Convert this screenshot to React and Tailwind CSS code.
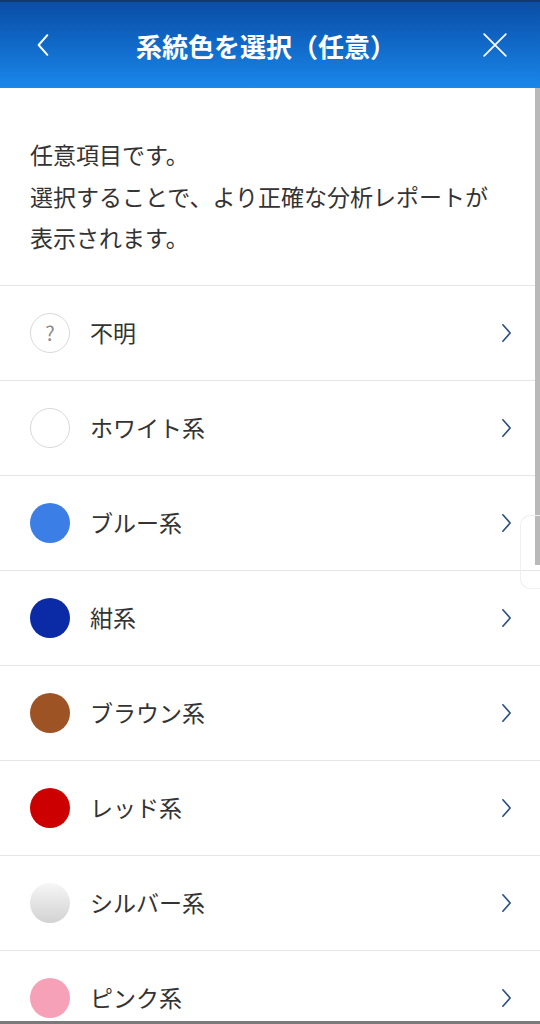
import React from 'react';

const colors = [
  { label: '不明', type: 'unknown' },
  { label: 'ホワイト系', type: 'white' },
  { label: 'ブルー系', cls: 'bg-[#3b7fe6]' },
  { label: '紺系', cls: 'bg-[#0b2ba6]' },
  { label: 'ブラウン系', cls: 'bg-[#9e5325]' },
  { label: 'レッド系', cls: 'bg-[#cc0000]' },
  { label: 'シルバー系', cls: 'bg-gradient-to-b from-[#f6f6f6] to-[#d2d2d2]' },
  { label: 'ピンク系', cls: 'bg-[#f7a1b9]' },
];

const Swatch = ({ item }) => {
  if (item.type === 'unknown') {
    return (
      <div className="w-10 h-10 rounded-full border border-[#d9d9d9] flex items-center justify-center text-[#8a8a8a] text-[20px]">
        ?
      </div>
    );
  }
  if (item.type === 'white') {
    return <div className="w-10 h-10 rounded-full border border-[#d9d9d9] bg-white" />;
  }
  return <div className={`w-10 h-10 rounded-full ${item.cls}`} />;
};

const Chevron = ({ className, dir = 'right' }) => (
  <svg viewBox="0 0 12 22" className={className} fill="none" stroke="currentColor" strokeWidth="1.8" strokeLinecap="round" strokeLinejoin="round">
    {dir === 'right' ? <path d="M2 2l8 9-8 9" /> : <path d="M10 2l-8 9 8 9" />}
  </svg>
);

export default function App() {
  return (
    <div className="relative h-[1024px] overflow-hidden bg-white" style={{ fontFamily: '"Noto Sans CJK JP", "Noto Sans", sans-serif' }}>
      {/* Header */}
      <header className="h-[88px] border-t-2 border-[#123a6e] bg-gradient-to-b from-[#0a4da6] to-[#1a87eb] flex items-center justify-between pl-[36px] pr-[32px] text-white">
        <Chevron dir="left" className="w-[14px] h-[24px]" />
        <h1 className="text-[26px] font-bold">系統色を選択（任意）</h1>
        <svg viewBox="0 0 24 24" className="w-[26px] h-[26px]" fill="none" stroke="currentColor" strokeWidth="1.6" strokeLinecap="round">
          <path d="M2 2l20 20M22 2L2 22" />
        </svg>
      </header>

      {/* Intro */}
      <div className="px-[30px] pt-[46px] pb-[26px] border-b border-[#e6e6e6] text-[23px] leading-[41.5px] text-[#333]">
        <p>任意項目です。</p>
        <p>選択することで、より正確な分析レポートが</p>
        <p>表示されます。</p>
      </div>

      {/* Color list */}
      <ul>
        {colors.map((item) => (
          <li key={item.label} className="h-[95px] border-b border-[#e6e6e6] flex items-center pl-[30px] pr-[28px]">
            <Swatch item={item} />
            <span className="ml-5 flex-1 text-[23px] text-[#333]">{item.label}</span>
            <Chevron className="w-[11px] h-[20px] text-[#2b4f82]" />
          </li>
        ))}
      </ul>

      {/* scrollbar overlay */}
      <div className="absolute right-0 top-[88px] w-[5px] h-[477px] bg-[#b9b9b9]" />
      <div className="absolute right-0 top-[515px] w-[20px] h-[74px] rounded-l-[10px] border border-r-0 border-[#efefef]" />
      <div className="absolute left-0 right-0 bottom-0 h-[3px] bg-[#7a7a7a]" />
    </div>
  );
}
